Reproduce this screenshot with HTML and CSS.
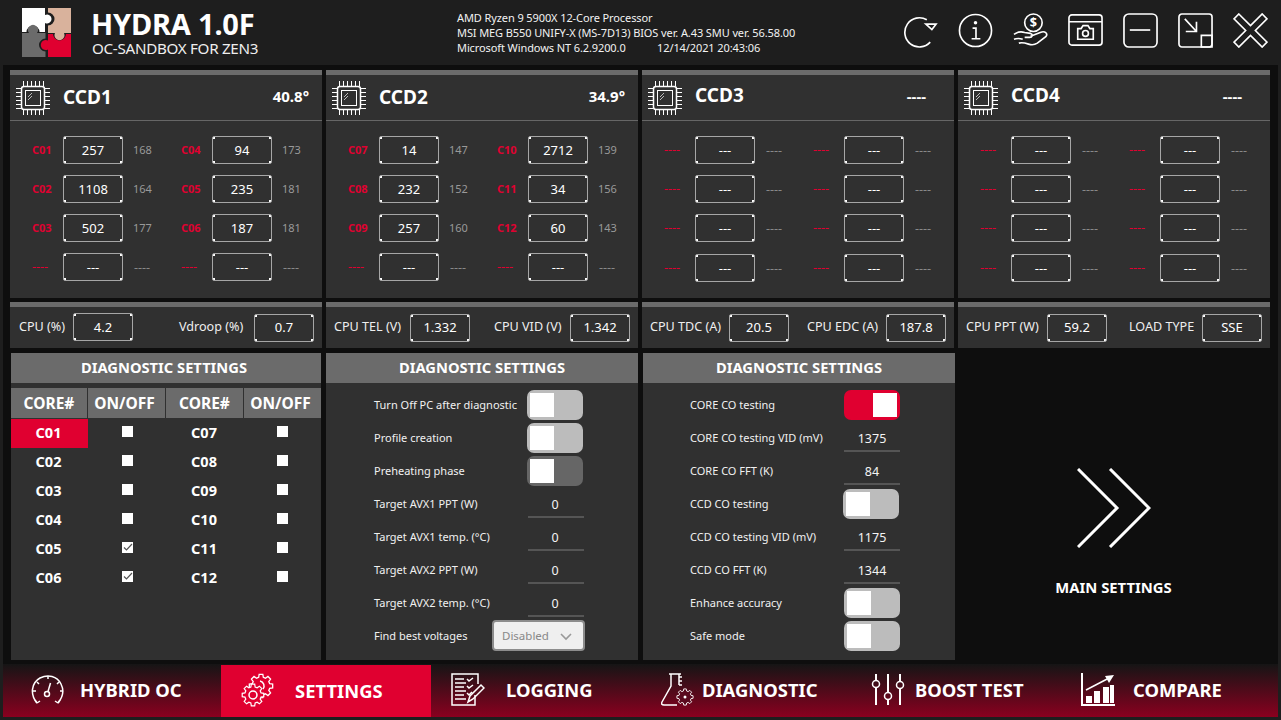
FILE: index.html
```html
<!DOCTYPE html>
<html lang="en">
<head>
<meta charset="utf-8">
<title>Hydra 1.0F</title>
<link rel="stylesheet" href="styles.css">
</head>
<body>
<svg class="sprite" aria-hidden="true">
  <defs>
    <symbol id="chip" viewBox="0 0 36 36">
      <g fill="none" stroke="#fff">
        <rect x="6.500" y="6.500" width="23" height="23" rx="2.500" stroke-width="1.500"/>
        <rect x="10.500" y="10.500" width="15" height="15" stroke-width="1"/>
        <path d="M8.500 1v5M12.500 1v5M16.500 1v5M20.500 1v5M24.500 1v5M28.500 1v5M8.500 30v5M12.500 30v5M16.500 30v5M20.500 30v5M24.500 30v5M28.500 30v5M1 8.500h5M1 12.500h5M1 16.500h5M1 20.500h5M1 24.500h5M1 28.500h5M30 8.500h5M30 12.500h5M30 16.500h5M30 20.500h5M30 24.500h5M30 28.500h5" stroke-width="1"/>
        <path d="M13 17l4-4M13 20l4-4" stroke="#bbb" stroke-width="1"/>
      </g>
    </symbol>
    <symbol id="gear" viewBox="-11 -11 22 22" overflow="visible">
      <polygon points="7.34,-1.97 9.88,-1.56 9.88,1.56 7.34,1.97 6.58,3.8 8.09,5.88 5.88,8.09 3.8,6.58 1.97,7.34 1.56,9.88 -1.56,9.88 -1.97,7.34 -3.8,6.58 -5.88,8.09 -8.09,5.88 -6.58,3.8 -7.34,1.97 -9.88,1.56 -9.88,-1.56 -7.34,-1.97 -6.58,-3.8 -8.09,-5.88 -5.88,-8.09 -3.8,-6.58 -1.97,-7.34 -1.56,-9.88 1.56,-9.88 1.97,-7.34 3.8,-6.58 5.88,-8.09 8.09,-5.88 6.58,-3.8"/>
    </symbol>
  </defs>
</svg>
<div class="app">
  <header class="topbar">
    <svg class="logo" viewBox="0 0 49 49">
      <path fill="#fff" d="M0 0H23V7A4.500 4.500 0 1 1 23 15V24H17.500A6.500 6.500 0 0 0 4.500 24H0Z"/>
      <path fill="#d9b29c" d="M26 0H49V25H42A5 5 0 1 1 33 25H26V17.500A6.500 6.500 0 0 0 26 4.500Z"/>
      <path fill="#6b6b6b" d="M0 25H7A5 5 0 1 1 15 25H23.500V30.500A6.500 6.500 0 0 0 23.500 43.500V49H0Z"/>
      <path fill="#e00030" d="M26 26H31A6.500 6.500 0 0 0 44 26H49V49H26V41.500A5 5 0 1 1 26 32.500Z"/>
    </svg>
    <div class="brand">
      <div class="brand-name">HYDRA 1.0F</div>
      <div class="brand-sub">OC-SANDBOX FOR ZEN3</div>
    </div>
    <div class="sysinfo">
      <div>AMD Ryzen 9 5900X 12-Core Processor</div>
      <div>MSI MEG B550 UNIFY-X (MS-7D13) BIOS ver. A.43 SMU ver. 56.58.00</div>
      <div class="sysline"><span class="sys-os">Microsoft Windows NT 6.2.9200.0</span><span>12/14/2021 20:43:06</span></div>
    </div>
    <div class="tools">
      <svg class="tool" viewBox="0 0 36 36"><path class="ln" d="M24.500 7A15 15 0 1 0 28 30"/><path class="ln" d="M23.500 11.500H34L29.700 17Z"/></svg>
      <svg class="tool" viewBox="0 0 36 36"><circle class="ln" cx="18" cy="18" r="16.500"/><path class="ln" d="M15 15.500h3.500V26M14 26.500h9"/><circle cx="18" cy="10" r="1.800" fill="#fff"/></svg>
      <svg class="tool" viewBox="0 0 36 36"><circle class="ln" cx="21" cy="10" r="9"/><text class="dollar" x="21" y="14.500">$</text><path class="ln" d="M1 22c4-3 8-3 11-2l6 1c3 1 2 4-1 4h-5M18 24l10-4c5-2 8 1 6 4l-9 7c-3 2-6 2-9 1s-7-2-10-1M1 27c3-1 6-1 9 0"/></svg>
      <svg class="tool" viewBox="0 0 36 36"><rect class="ln" x="1" y="2" width="34" height="31" rx="3"/><path class="ln" d="M1 9H35"/><path class="ln" d="M10 16h3.500l2-3h5l2 3H26v11H10Z"/><circle class="ln" cx="18" cy="21" r="3"/></svg>
      <svg class="tool" viewBox="0 0 36 36"><rect class="ln" x="1" y="1" width="34" height="34" rx="5"/><path class="ln" d="M7 17.500H28"/></svg>
      <svg class="tool" viewBox="0 0 36 36"><rect class="ln" x="1" y="1" width="34" height="34" rx="3"/><path class="ln" d="M24 23H35V35H24Z"/><path class="ln" d="M7 6L19 19M19 9V19H8"/></svg>
      <svg class="tool" viewBox="0 0 36 36"><polygon class="ln" points="6,1 18,13 30,1 35,6 23,18 35,30 30,35 18,23 6,35 1,30 13,18 1,6"/></svg>
    </div>
  </header>

  <main class="workspace">
    <section class="ccd-row">
      <article class="panel ccd">
        <div class="ccd-head"><svg class="chip"><use href="#chip"/></svg><h2 class="ccd-name">CCD1</h2><span class="ccd-temp">40.8°</span></div>
        <div class="core-grid">
          <div class="core"><span class="core-id">C01</span><span class="box">257</span><span class="core-side">168</span></div>
          <div class="core"><span class="core-id">C04</span><span class="box">94</span><span class="core-side">173</span></div>
          <div class="core"><span class="core-id">C02</span><span class="box">1108</span><span class="core-side">164</span></div>
          <div class="core"><span class="core-id">C05</span><span class="box">235</span><span class="core-side">181</span></div>
          <div class="core"><span class="core-id">C03</span><span class="box">502</span><span class="core-side">177</span></div>
          <div class="core"><span class="core-id">C06</span><span class="box">187</span><span class="core-side">181</span></div>
          <div class="core"><span class="core-id thin">----</span><span class="box">---</span><span class="core-side thin">----</span></div>
          <div class="core"><span class="core-id thin">----</span><span class="box">---</span><span class="core-side thin">----</span></div>
        </div>
      </article>
      <article class="panel ccd">
        <div class="ccd-head"><svg class="chip"><use href="#chip"/></svg><h2 class="ccd-name">CCD2</h2><span class="ccd-temp">34.9°</span></div>
        <div class="core-grid">
          <div class="core"><span class="core-id">C07</span><span class="box">14</span><span class="core-side">147</span></div>
          <div class="core"><span class="core-id">C10</span><span class="box">2712</span><span class="core-side">139</span></div>
          <div class="core"><span class="core-id">C08</span><span class="box">232</span><span class="core-side">152</span></div>
          <div class="core"><span class="core-id">C11</span><span class="box">34</span><span class="core-side">156</span></div>
          <div class="core"><span class="core-id">C09</span><span class="box">257</span><span class="core-side">160</span></div>
          <div class="core"><span class="core-id">C12</span><span class="box">60</span><span class="core-side">143</span></div>
          <div class="core"><span class="core-id thin">----</span><span class="box">---</span><span class="core-side thin">----</span></div>
          <div class="core"><span class="core-id thin">----</span><span class="box">---</span><span class="core-side thin">----</span></div>
        </div>
      </article>
      <article class="panel ccd">
        <div class="ccd-head ccd-head-idle"><svg class="chip"><use href="#chip"/></svg><h2 class="ccd-name">CCD3</h2><span class="ccd-temp">----</span></div>
        <div class="core-grid core-grid-idle">
          <div class="core"><span class="core-id thin">----</span><span class="box">---</span><span class="core-side thin">----</span></div>
          <div class="core"><span class="core-id thin">----</span><span class="box">---</span><span class="core-side thin">----</span></div>
          <div class="core"><span class="core-id thin">----</span><span class="box">---</span><span class="core-side thin">----</span></div>
          <div class="core"><span class="core-id thin">----</span><span class="box">---</span><span class="core-side thin">----</span></div>
          <div class="core"><span class="core-id thin">----</span><span class="box">---</span><span class="core-side thin">----</span></div>
          <div class="core"><span class="core-id thin">----</span><span class="box">---</span><span class="core-side thin">----</span></div>
          <div class="core"><span class="core-id thin">----</span><span class="box">---</span><span class="core-side thin">----</span></div>
          <div class="core"><span class="core-id thin">----</span><span class="box">---</span><span class="core-side thin">----</span></div>
        </div>
      </article>
      <article class="panel ccd">
        <div class="ccd-head ccd-head-idle"><svg class="chip"><use href="#chip"/></svg><h2 class="ccd-name">CCD4</h2><span class="ccd-temp">----</span></div>
        <div class="core-grid core-grid-idle">
          <div class="core"><span class="core-id thin">----</span><span class="box">---</span><span class="core-side thin">----</span></div>
          <div class="core"><span class="core-id thin">----</span><span class="box">---</span><span class="core-side thin">----</span></div>
          <div class="core"><span class="core-id thin">----</span><span class="box">---</span><span class="core-side thin">----</span></div>
          <div class="core"><span class="core-id thin">----</span><span class="box">---</span><span class="core-side thin">----</span></div>
          <div class="core"><span class="core-id thin">----</span><span class="box">---</span><span class="core-side thin">----</span></div>
          <div class="core"><span class="core-id thin">----</span><span class="box">---</span><span class="core-side thin">----</span></div>
          <div class="core"><span class="core-id thin">----</span><span class="box">---</span><span class="core-side thin">----</span></div>
          <div class="core"><span class="core-id thin">----</span><span class="box">---</span><span class="core-side thin">----</span></div>
        </div>
      </article>
    </section>

    <section class="stats-row">
      <div class="panel stats stats-a"><span>CPU (%)</span><span class="box">4.2</span><span></span><span>Vdroop (%)</span><span class="box">0.7</span></div>
      <div class="panel stats stats-b"><span>CPU TEL (V)</span><span class="box">1.332</span><span></span><span>CPU VID (V)</span><span class="box">1.342</span></div>
      <div class="panel stats stats-c"><span>CPU TDC (A)</span><span class="box">20.5</span><span></span><span>CPU EDC (A)</span><span class="box">187.8</span></div>
      <div class="panel stats stats-d"><span>CPU PPT (W)</span><span class="box">59.2</span><span></span><span>LOAD TYPE</span><span class="box">SSE</span></div>
    </section>

    <section class="settings-row">
      <div class="settings settings-cores">
        <h3 class="settings-title">DIAGNOSTIC SETTINGS</h3>
        <div class="core-table">
          <div class="th">CORE#</div><div class="th th-onoff">ON/OFF</div><div class="th">CORE#</div><div class="th th-onoff">ON/OFF</div>
          <div class="td td-active">C01</div><div class="td"><span class="check"></span></div><div class="td">C07</div><div class="td"><span class="check"></span></div>
          <div class="td">C02</div><div class="td"><span class="check"></span></div><div class="td">C08</div><div class="td"><span class="check"></span></div>
          <div class="td">C03</div><div class="td"><span class="check"></span></div><div class="td">C09</div><div class="td"><span class="check"></span></div>
          <div class="td">C04</div><div class="td"><span class="check"></span></div><div class="td">C10</div><div class="td"><span class="check"></span></div>
          <div class="td">C05</div><div class="td"><span class="check"><svg viewBox="0 0 11 11"><path d="M2 5.500l2.500 2.500L10 2" fill="none" stroke="#555" stroke-width="1.200"/></svg></span></div><div class="td">C11</div><div class="td"><span class="check"></span></div>
          <div class="td">C06</div><div class="td"><span class="check"><svg viewBox="0 0 11 11"><path d="M2 5.500l2.500 2.500L10 2" fill="none" stroke="#555" stroke-width="1.200"/></svg></span></div><div class="td">C12</div><div class="td"><span class="check"></span></div>
        </div>
      </div>

      <div class="settings">
        <h3 class="settings-title">DIAGNOSTIC SETTINGS</h3>
        <div class="form form-mid">
          <label class="form-label">Turn Off PC after diagnostic</label><span class="toggle"><i></i></span>
          <label class="form-label">Profile creation</label><span class="toggle"><i></i></span>
          <label class="form-label">Preheating phase</label><span class="toggle toggle-dark"><i></i></span>
          <label class="form-label">Target AVX1 PPT (W)</label><span class="field">0</span>
          <label class="form-label">Target AVX1 temp. (°C)</label><span class="field">0</span>
          <label class="form-label">Target AVX2 PPT (W)</label><span class="field">0</span>
          <label class="form-label">Target AVX2 temp. (°C)</label><span class="field">0</span>
          <label class="form-label">Find best voltages</label>
          <span class="select">Disabled<svg viewBox="0 0 12 8"><path d="M1 1l5 5 5-5" fill="none" stroke="#999" stroke-width="1.600"/></svg></span>
        </div>
      </div>

      <div class="settings">
        <h3 class="settings-title">DIAGNOSTIC SETTINGS</h3>
        <div class="form form-right">
          <label class="form-label">CORE CO testing</label><span class="toggle toggle-on"><i></i></span>
          <label class="form-label">CORE CO testing VID (mV)</label><span class="field">1375</span>
          <label class="form-label">CORE CO FFT (K)</label><span class="field">84</span>
          <label class="form-label">CCD CO testing</label><span class="toggle toggle-left"><i></i></span>
          <label class="form-label">CCD CO testing VID (mV)</label><span class="field">1175</span>
          <label class="form-label">CCD CO FFT (K)</label><span class="field">1344</span>
          <label class="form-label">Enhance accuracy</label><span class="toggle"><i></i></span>
          <label class="form-label">Safe mode</label><span class="toggle"><i></i></span>
        </div>
      </div>

      <div class="main-link">
        <svg class="chevrons" viewBox="0 0 74 80"><path d="M1 1L40 40 1 79M33 1L72 40 33 79" fill="none" stroke="#fff" stroke-width="3"/></svg>
        <div class="main-link-text">MAIN SETTINGS</div>
      </div>
    </section>
  </main>

  <nav class="tabs">
    <a class="tab tab-hybrid"><svg class="tab-icon" viewBox="0 0 34 34"><path class="ln" d="M6 30C-1 22 0 10 9 5c8-4 17-2 21 6 3 6 2 13-3 19"/><path class="ln" d="M6 30l-2-3M6 30l3-2M27 30l2-3M27 30l-3-2M17 3v3M6 9l2 2M28 9l-2 2M2 18h3M29 18h3"/><circle class="ln" cx="16" cy="21" r="2.500"/><path class="ln" d="M17 18.500L19.500 10"/></svg><span class="tab-label">HYBRID OC</span></a>
    <a class="tab tab-active tab-settings"><svg class="tab-icon" viewBox="0 0 34 34"><use href="#gear" class="gear-line" x="7" y="0" width="26" height="26"/><use href="#gear" class="gear-line" x="0" y="10" width="24" height="24"/><circle class="ln" cx="12" cy="22" r="4"/><path class="ln" d="M19 8a5 5 0 0 1 3 8"/></svg><span class="tab-label">SETTINGS</span></a>
    <a class="tab tab-logging"><svg class="tab-icon" viewBox="0 0 34 34"><path class="ln" d="M24 22V32H1V1H27V11"/><path class="ln" d="M4 6h9M4 10h11M4 14h9M4 18h11M4 22h9M4 26h11M16 6l2 2 4-3M16 13l2 2 4-3M16 20l2 2 3-3"/><path class="ln" d="M17 29l2-6 11-11 3 3-11 11Z"/></svg><span class="tab-label">LOGGING</span></a>
    <a class="tab tab-diagnostic"><svg class="tab-icon" viewBox="0 0 34 34"><path class="ln" d="M8 1H20M10 1V13L1 29c-1 2 0 3 2 3H16M18 1V12M18 4h3M18 8h3M18 12h3"/><use href="#gear" class="gear-line" x="15" y="15" width="18" height="18"/><circle cx="24" cy="24" r="1.500" fill="#fff"/></svg><span class="tab-label">DIAGNOSTIC</span></a>
    <a class="tab tab-boost"><svg class="tab-icon" viewBox="0 0 34 34"><path class="ln thick" d="M5 1V7M5 15V32M17 1V19M17 27V32M29 1V8M29 16V32"/><circle class="ln" cx="5" cy="11" r="3.500"/><circle class="ln" cx="17" cy="23" r="3.500"/><circle class="ln" cx="29" cy="12" r="3.500"/></svg><span class="tab-label">BOOST TEST</span></a>
    <a class="tab tab-compare"><svg class="tab-icon" viewBox="0 0 34 34"><path class="ln thick" d="M1 0V32H34"/><path fill="#fff" d="M5 23h6v7H5ZM13 18h6v12h-6ZM22 14h6v16h-6ZM29 12h4v18h-4Z"/><path class="ln" d="M5 17L30 4"/><path fill="#fff" d="M33 2L24 3l4 7Z"/></svg><span class="tab-label">COMPARE</span></a>
  </nav>
</div>
</body>
</html>
```
FILE: styles.css
```css
* { box-sizing: border-box; }
html, body { margin: 0; height: 720px; overflow: hidden; }
body { background: #1e1e1e; color: #fff; font-family: "Noto Sans", "Open Sans", sans-serif; }
.sprite { width: 0; height: 0; display: block; }
.app { width: 1281px; height: 720px; display: flex; flex-direction: column; }
.ln { fill: none; stroke: #fff; stroke-width: 1.5; }
.ln.thick { stroke-width: 2; }

/* top bar */
.topbar { height: 65px; display: flex; align-items: flex-start; padding-left: 22px; flex: none; }
.logo { width: 49px; height: 49px; margin-top: 8px; flex: none; }
.brand { margin-left: 20px; margin-top: 7px; width: 366px; flex: none; }
.brand-name { font-size: 29px; font-weight: 700; line-height: 34px; letter-spacing: -0.2px; }
.brand-sub { font-size: 15.200px; line-height: 15px; letter-spacing: -0.3px; margin-left: 1px; color: #eee; }
.sysinfo { font-size: 11px; line-height: 15px; margin-top: 10px; width: 446px; flex: none; color: #f2f2f2; letter-spacing: -0.1px; }
.sysline { display: flex; }
.sys-os { width: 200px; }
.tools { display: flex; gap: 20px; margin-top: 13px; }
.tool { width: 35px; height: 35px; flex: none; display: block; }
.tool .ln { stroke-width: 1.7; }
.dollar { fill: #fff; font-size: 13px; font-weight: 700; text-anchor: middle; }

/* workspace */
.workspace { flex: none; height: 599px; margin: 0 3px; background: #0e0e0e; padding: 5px 7px 4px; display: flex; flex-direction: column; }
.panel { background: #303030; border-top: 5px solid #6b6b6b; }
.ccd-row { display: grid; grid-template-columns: repeat(4, 312px); gap: 4px; height: 228px; }
.ccd-head { height: 46px; border-bottom: 1px solid #666; display: flex; align-items: center; padding: 0 13px 0 5px; }
.chip { width: 36px; height: 36px; flex: none; }
.ccd-name { font-size: 19px; font-weight: 700; margin: 0 0 2px 12px; flex: 1; }
.ccd-temp { font-size: 15px; font-weight: 700; margin-bottom: 4px; }
.ccd-head-idle .ccd-name { margin-bottom: 5px; }
.ccd-head-idle .ccd-temp { margin: 0 15px 3px 0; }
.core-grid { display: grid; grid-template-columns: 149px 149px; grid-auto-rows: 28px; row-gap: 11px; padding: 15px 0 0 22px; }
.core-grid-idle .core:nth-child(n+7) { margin-top: 1px; }
.core { display: grid; grid-template-columns: 31px 60px 1fr; align-items: center; font-size: 11px; }
.core-id { color: #e00030; font-weight: 700; margin-bottom: 2px; }
.core-id.thin { font-weight: 400; font-size: 12.500px; margin-bottom: 1px; }
.core-side { color: #999; margin: 0 0 2px 10px; }
.core-side.thin { color: #888; margin: 0 0 0 11px; font-size: 12.500px; }
.box {
  height: 28px; display: flex; align-items: center; justify-content: center; font-size: 13px;
  border: 1px solid #a6a6a6; border-radius: 2px; color: #fff;
  background:
    linear-gradient(#fff, #fff) 0 0 / 2px 2px no-repeat,
    linear-gradient(#fff, #fff) 100% 0 / 2px 2px no-repeat,
    linear-gradient(#fff, #fff) 0 100% / 2px 2px no-repeat,
    linear-gradient(#fff, #fff) 100% 100% / 2px 2px no-repeat;
}

/* stats */
.stats-row { display: grid; grid-template-columns: repeat(4, 312px); gap: 4px; height: 46px; margin-top: 4px; }
.stats { display: grid; align-items: center; padding: 0 8px 0 9px; font-size: 12.600px; color: #eee; }
.stats > span:not(.box) { white-space: nowrap; margin-bottom: 2px; }
.stats-a { grid-template-columns: 54px 60px 1fr 75px 60px; }
.stats-a .box:nth-child(2) { margin-bottom: 1px; }
.stats-b { grid-template-columns: 76px 60px 1fr 76px 60px; padding-left: 8px; }
.stats-c { grid-template-columns: 79px 60px 1fr 79px 60px; padding-left: 8px; }
.stats-d { grid-template-columns: 81px 60px 1fr 73px 60px; padding-left: 8px; }
.stats .box { height: 28px; padding-bottom: 1px; }

/* settings */
.settings-row { display: grid; grid-template-columns: 310px 312px 312px 1fr; column-gap: 5px; height: 307px; margin-top: 5px; padding-left: 1px; }
.settings { background: #303030; display: flex; flex-direction: column; }
.settings-title { margin: 0; height: 30px; background: #6b6b6b; font-size: 14.700px; font-weight: 700; text-align: center; line-height: 29px; flex: none; }
.settings-cores .settings-title { padding-right: 4px; }
.core-table { display: grid; grid-template-columns: 77px 78px 78px 77px; grid-template-rows: 31px repeat(6, 29px); margin-top: 5px; }
.th { background: #6b6b6b; margin: 0 1px 1px 0; display: flex; align-items: center; justify-content: center; font-size: 15.500px; font-weight: 700; }
.th-onoff { padding-right: 4px; }
.th:nth-child(4) { margin-right: 0; }
.td { display: flex; align-items: center; justify-content: center; font-size: 14.500px; font-weight: 700; padding-bottom: 3px; }
.td:nth-child(odd) { padding-right: 2px; }
.td-active { background: #e00030; }
.check { width: 11px; height: 11px; background: #fff; display: block; margin-bottom: 1px; }
.check svg { display: block; width: 11px; height: 11px; }

.form { display: grid; grid-auto-rows: 33px; align-items: center; padding-top: 5px; }
.form-mid { grid-template-columns: 153px 56px; padding-left: 48px; }
.form-mid .field { margin: 0 -1px 0 1px; padding-right: 2px; }
.form-right { grid-template-columns: 154px 56px; padding-left: 47px; }
.form-label { font-size: 11px; color: #f0f0f0; white-space: nowrap; }
.toggle { width: 56px; height: 30px; border-radius: 7px; background: #bcbcbc; display: flex; align-items: center; padding: 0 3px; justify-self: start; }
.toggle-left { margin-left: -1px; }
.toggle i { width: 24px; height: 24px; background: #fff; display: block; }
.toggle-dark { background: #666; }
.toggle-on { background: #e00030; justify-content: flex-end; }
.field { height: 28px; border-bottom: 2px solid #555; display: flex; align-items: center; justify-content: center; font-size: 12.500px; padding-top: 3px; color: #f4f4f4; }
.select { width: 93px; height: 31px; margin-left: -35px; background: #efefef; border: 2px solid #8c8c8c; border-radius: 4px; color: #888; font-size: 11.500px; display: flex; align-items: center; padding-left: 8px; gap: 11px; justify-self: start; }
.select svg { width: 12px; height: 8px; flex: none; margin-top: 2px; }

.main-link { display: flex; flex-direction: column; align-items: center; padding: 115px 4px 0 0; }
.chevrons { width: 74px; height: 80px; display: block; }
.main-link-text { font-size: 14.800px; font-weight: 700; margin-top: 29px; }

/* tabs */
.tabs { flex: none; height: 53px; margin: 0 3px; padding-left: 8px; display: grid; grid-template-columns: repeat(6, 210px); background: linear-gradient(#151515, #8a001f); }
.tab { display: flex; align-items: center; padding-left: 20px; font-size: 18.400px; font-weight: 700; color: #fff; padding-bottom: 2px; }
.tab-active { background: #e00030; margin-top: 1px; }
.tab-icon { width: 34px; height: 34px; flex: none; }
.tab-hybrid .tab-label { margin-left: 15px; }
.tab-settings .tab-label { margin-left: 20px; }
.tab-logging .tab-label { margin-left: 21px; }
.tab-diagnostic .tab-label { margin-left: 7px; }
.tab-boost .tab-label { margin-left: 10px; }
.tab-compare .tab-label { margin-left: 18px; }
.gear-line { fill: #151515; stroke: #fff; stroke-width: 1.1; }
.tab-active .gear-line { fill: #e00030; }
.tab-diagnostic .gear-line { fill: #5a0a1e; }
```
